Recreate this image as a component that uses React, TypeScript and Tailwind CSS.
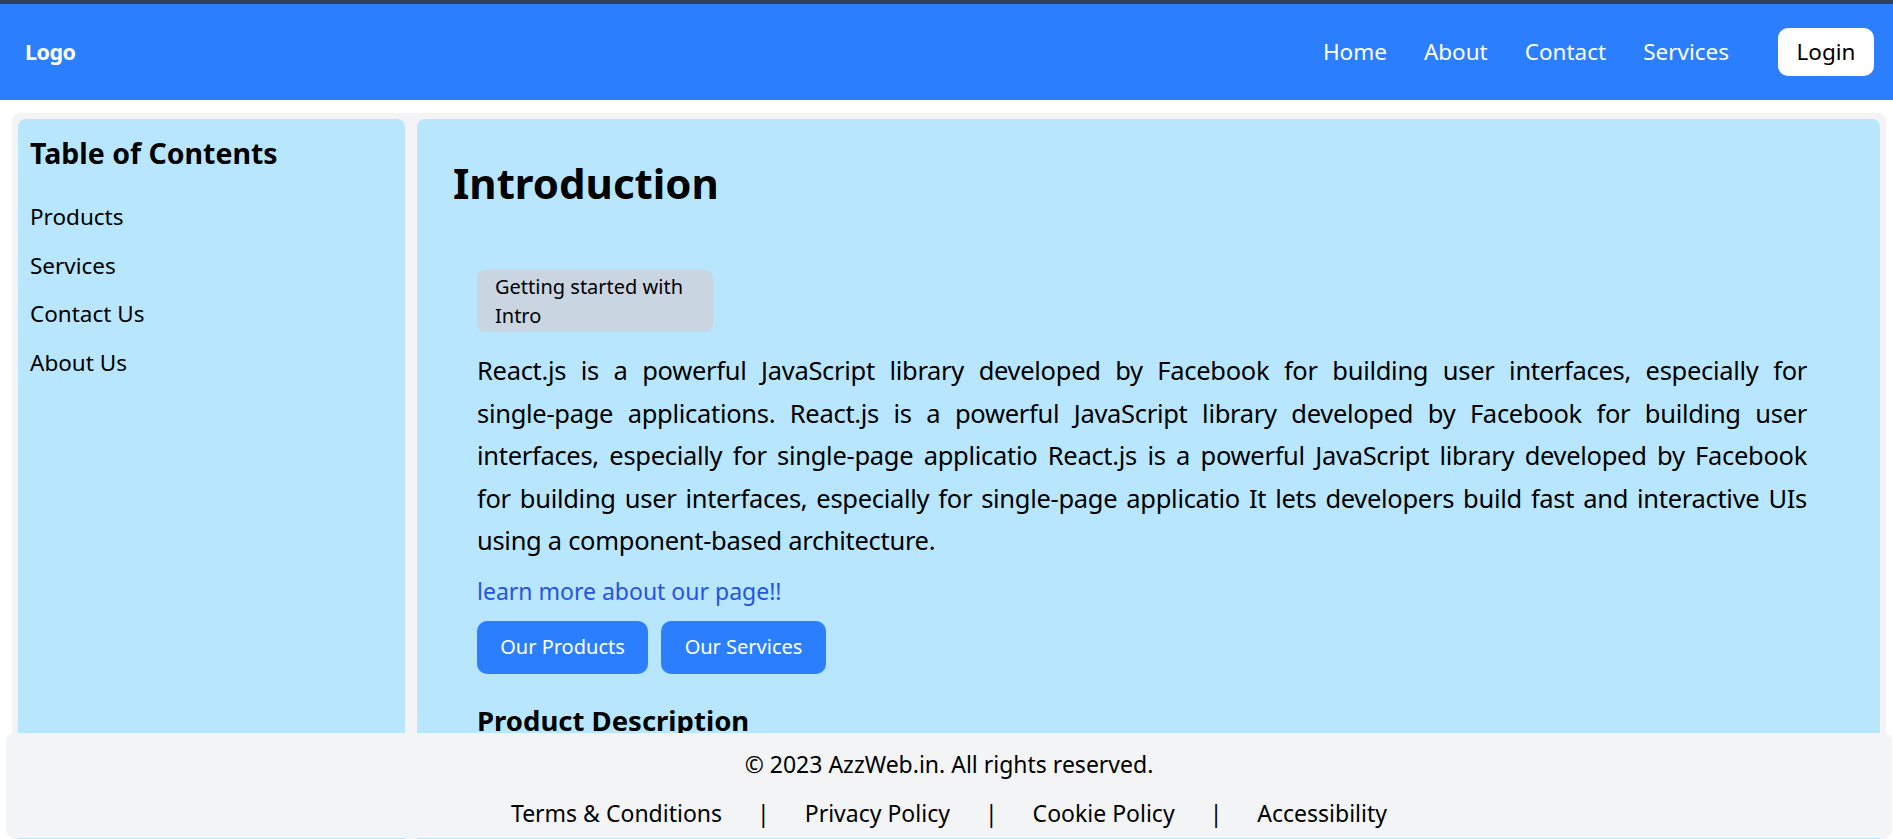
import React from 'react';

const navLinks = ['Home', 'About', 'Contact', 'Services'];
const tocLinks = ['Products', 'Services', 'Contact Us', 'About Us'];
const footerLinks = ['Terms & Conditions', 'Privacy Policy', 'Cookie Policy', 'Accessibility'];

// intro paragraph, split where the design wraps it
const introLines = [
  'React.js is a powerful JavaScript library developed by Facebook for building user interfaces, especially for',
  'single-page applications. React.js is a powerful JavaScript library developed by Facebook for building user',
  'interfaces, especially for single-page applicatio React.js is a powerful JavaScript library developed by Facebook',
  'for building user interfaces, especially for single-page applicatio It lets developers build fast and interactive UIs',
];
const introLast = 'using a component-based architecture.';

export default function App() {
  return (
    <div className="min-h-screen bg-white text-black font-['Noto_Sans',sans-serif]">
      {/* Header */}
      <header className="h-[100px] border-t-4 border-[#314158] bg-[#2b7fff] flex items-center justify-between pl-[25px] pr-[19px]">
        <a href="#" className="text-[21.5px] font-bold text-white tracking-tight">
          Logo
        </a>
        <nav className="flex items-center">
          <div className="flex items-center gap-[37px] mr-[49px]">
            {navLinks.map((l) => (
              <a key={l} href="#" className="text-[22.5px] text-white">
                {l}
              </a>
            ))}
          </div>
          <button className="h-[48px] w-[96px] rounded-[10px] bg-white text-[22.5px] text-black">
            Login
          </button>
        </nav>
      </header>

      {/* Body */}
      <div className="mt-[13px] ml-[12px] mr-[7px] rounded-lg bg-gray-100 p-[6px] flex gap-[12px]">
        <aside className="w-[387px] shrink-0 rounded-lg bg-[#b8e6fe] pl-[12px] pt-[16px] min-h-[760px]">
          <h2 className="text-[28.5px] font-bold leading-[36px]">Table of Contents</h2>
          <ul className="mt-[29px] flex flex-col gap-[14.5px]">
            {tocLinks.map((t) => (
              <li key={t} className="text-[22.5px] leading-[34px]">
                <a href="#">{t}</a>
              </li>
            ))}
          </ul>
        </aside>

        <main className="flex-1 rounded-lg bg-[#b8e6fe] pl-[36px] pr-[49px] pt-[36px] pb-[200px]">
          <h1 className="text-[42px] font-bold leading-[56px]">Introduction</h1>

          <section className="px-[24px] mt-[59px]">
            <div className="w-[236px] rounded-lg bg-[#cad5e2] px-[18px] py-[2px] text-[20px] leading-[29px]">
              Getting started with Intro
            </div>

            <p className="mt-[17px] text-[25.5px] leading-[42.5px] tracking-[-0.3px] text-justify">
              {introLines.map((line) => (
                <span key={line} className="block whitespace-nowrap [text-align-last:justify]">
                  {line}
                </span>
              ))}
              <span className="block">{introLast}</span>
            </p>

            <a href="#" className="mt-[14px] block text-[23px] leading-[30px] text-[#2453e6]">
              learn more about our page!!
            </a>

            <div className="mt-[15px] flex gap-[13px]">
              <button className="h-[53px] w-[171px] rounded-[10px] bg-[#2b7fff] text-[20px] text-white">
                Our Products
              </button>
              <button className="h-[53px] w-[165px] rounded-[10px] bg-[#2b7fff] text-[20px] text-white">
                Our Services
              </button>
            </div>

            <h3 className="mt-[29px] text-[27.5px] font-bold leading-[36px]">Product Description</h3>
            <p className="mt-[12px] text-[25px] leading-[42.5px] text-justify">
              Our products are built with modern tools and designed to be fast, accessible and easy to use.
            </p>
          </section>
        </main>
      </div>

      {/* Footer */}
      <footer className="fixed left-[6px] right-[1px] bottom-[1px] h-[105px] rounded-lg bg-gray-100 flex flex-col items-center pt-[16px]">
        <p className="text-[23px] leading-[30px]">© 2023 AzzWeb.in. All rights reserved.</p>
        <div className="mt-[19px] flex items-center gap-[35px] text-[23px] leading-[30px]">
          {footerLinks.map((f, i) => (
            <React.Fragment key={f}>
              {i > 0 && <span>|</span>}
              <a href="#">{f}</a>
            </React.Fragment>
          ))}
        </div>
      </footer>
    </div>
  );
}
